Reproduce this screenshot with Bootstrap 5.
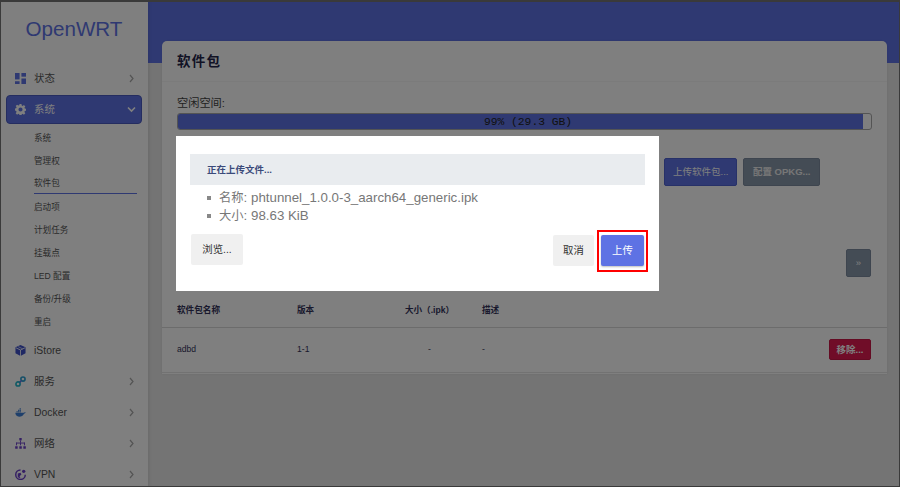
<!DOCTYPE html>
<html lang="zh-CN">
<head>
<meta charset="utf-8">
<title>OpenWRT</title>
<link href="https://cdn.jsdelivr.net/npm/bootstrap@5.3.0/dist/css/bootstrap.min.css" rel="stylesheet">
<style>
html,body{height:100%;overflow:hidden}
body{font-family:"Liberation Sans","Noto Sans CJK SC",sans-serif;background:#e8e8e8;color:#32325d;font-size:10px}
.shell{height:487px;width:900px;overflow:hidden}
.side{width:148px;flex:none;background:#fff;box-shadow:0 0 4px rgba(0,0,0,.15);z-index:1;height:487px;overflow:hidden}
.side>*{flex:none}
.brand{height:64px;padding-top:14px;font-size:20.6px;line-height:30px;color:#5e72e4;text-align:center}
.top-item{display:flex;align-items:center;height:29px;margin:0 6px 2px;padding:0 7px 0 9px;font-size:10.4px;color:#555;border-radius:4px;text-decoration:none}
.top-item svg.ico{width:11px;height:11px;margin-right:8px;flex:none}
.top-item .chev{margin-left:auto;width:7px;height:9px;color:#a8a8a8}
.top-item.on{background:#5e72e4;color:#fff;border:1px solid #4a5bc0;padding:0 5px 0 8px}
.top-item.on .chev{width:9px;height:7px;color:#fff}
.sub-list{margin:0 0 3px;padding:0}
.sub-list li{list-style:none;height:23px;line-height:25px;margin-left:34px;margin-right:11px;font-size:8.6px;color:#555}
.sub-list li.cur{border-bottom:1px solid #5e72e4;height:22px;line-height:23px;margin-bottom:1px}
.main-pane{min-width:0}
.hero{height:63px;background:#5e72e4;margin-bottom:-22px;flex:none}
.sheet{margin:0 13px 0 14px;background:#fff;border-radius:5px 5px 0 0;box-shadow:0 0 2px rgba(0,0,0,.08);height:333px;z-index:1;position:relative}
.sheet-head{height:41px;padding:10px 15px 0;font-size:13.5px;font-weight:700;line-height:21px;color:#25254a;border-bottom:1px solid #f6f6f6;letter-spacing:1.2px}
.sheet-body{padding:14px 15px 0}
.free-lbl{font-size:11.2px;line-height:14px;color:#444;margin-bottom:3px}
.free-bar{height:17px;border:1px solid #a8a8a8;border-radius:3px;background:#fff;position:relative;font:11.3px/16px "Liberation Mono",monospace;color:#333}
.free-fill{background:#5e72e4;border-radius:2px 0 0 2px;height:100%}
.free-txt{position:absolute;left:7px;right:0;top:0;text-align:center;color:#222}
.tool-row{margin-top:28px;height:28px;padding-right:52px}
.mini-btn{font-size:9.5px;height:28px;padding:0 8px;border-radius:2px;line-height:26px;color:#fff;border:1px solid}
.mini-blue{background:#5e72e4;border-color:#4e62d0;margin-right:6px}
.mini-slate{background:#8898aa;border-color:#7c8b9e;color:#eee;font-weight:700;padding:0 8.5px}
.next-row{margin-top:63px;height:28px;padding-right:1px}
.next-btn{width:25px;height:28px;background:#8898aa;border:1px solid #7c8b9e;border-radius:2px;color:#fff;padding:0;font-size:9.5px;line-height:24px}
.pkg-table{--bs-table-bg:transparent;margin:18px 0 0 0;table-layout:fixed;font-size:8.6px;width:100%}
.pkg-table>thead th{height:32px;font-weight:700;border-bottom:1px solid #d8d8d8;color:#33335a;vertical-align:middle;padding:0 0 0 15px}
.pkg-table>tbody td{height:45px;border-bottom:1px solid #e4e4e4;color:#33335a;vertical-align:middle;padding:0 0 0 15px;font-size:8.6px}
.c-name{width:120px}.c-ver{width:100px}.c-size{width:85px}
.pkg-table>thead th.c-size,.pkg-table>tbody td.c-size{padding-left:10px;padding-right:0;text-align:center}
.rm-btn{background:#e01a50;border:1px solid #c81646;font-size:9.5px;color:#fff;height:21px;width:42px;padding:0;line-height:18px;border-radius:2px;font-weight:700}
.frame-edge{position:fixed;inset:0;border:1px solid #3a3a3a;border-top-width:2px;z-index:1100;pointer-events:none}
.upload-dlg{position:fixed;left:176px;top:136px;width:483px;height:155px;background:#fff;z-index:1060;padding:18px 14px 0;color:#666}
.up-title{background:#e9ecef;height:31px;line-height:31px;padding-left:17px;font-size:9.5px;font-weight:700;color:#3b4a7a}
.up-list{list-style:none;margin:4px 0 0;padding:0 0 0 17px;font-size:13.3px;line-height:18px;color:#777}
.up-list li::before{content:"";display:inline-block;width:4px;height:4px;background:#888;margin-right:8px;vertical-align:2px}
.cjk-lab{font-size:12.3px}
.up-actions{margin-top:9px}
.dlg-btn{font-size:10.4px;height:31px;padding:0;background:#f0f0f0;border:0;border-radius:2px;color:#333}
.dlg-browse{width:52px;margin-left:1px}
.dlg-cancel{width:41px;margin-top:1px}
.dlg-send{width:43px;margin:1px 1px 0 7px;background:#5e72e4;color:#fff;box-shadow:0 1px 2px rgba(0,0,0,.25)}
.red-mark{position:absolute;left:421px;top:94px;width:51px;height:42px;border:2px solid #f00;pointer-events:none}
</style>
</head>
<body>
<div class="shell d-flex">
  <aside class="side d-flex flex-column">
    <div class="brand">OpenWRT</div>
    <a class="top-item"><svg class="ico" viewBox="0 0 12 12" fill="#5e72e4"><rect x="0" y="0" width="5" height="7"/><rect x="7" y="0" width="5" height="4"/><rect x="7" y="6" width="5" height="6"/><rect x="0" y="9" width="5" height="3"/></svg>状态<svg class="chev" viewBox="0 0 7 9" fill="none" stroke="currentColor" stroke-width="1.2"><path d="M2 1l3 3.500-3 3.500"/></svg></a>
    <a class="top-item on"><svg class="ico" viewBox="0 0 16 16" fill="#fff"><path fill-rule="evenodd" d="M6.600 0h2.800l.4 2.200 1.300.6 1.900-1.300 2 2-1.300 1.900.6 1.300 2.200.4v2.800l-2.200.4-.6 1.300 1.300 1.900-2 2-1.900-1.300-1.300.6-.4 2.200H6.600l-.4-2.200-1.300-.6-1.900 1.300-2-2 1.300-1.900-.6-1.300L-.5 9.400V6.600l2.200-.4.6-1.300L1 3l2-2 1.900 1.300 1.300-.6zM8 5a3 3 0 1 0 0 6 3 3 0 0 0 0-6z"/></svg>系统<svg class="chev" viewBox="0 0 9 7" fill="none" stroke="currentColor" stroke-width="1.600"><path d="M1 1.500l3.500 3.500 3.500-3.500"/></svg></a>
    <ul class="sub-list">
      <li>系统</li><li>管理权</li><li class="cur">软件包</li><li>启动项</li><li>计划任务</li><li>挂载点</li><li>LED 配置</li><li>备份/升级</li><li>重启</li>
    </ul>
    <a class="top-item"><svg class="ico" viewBox="0 0 12 12"><path d="M6 0l5.500 2.500v6.500L6 12 .5 9V2.500z" fill="#3f51c8"/><path d="M1 3l5 2.500L11 3M6 5.500V12" stroke="#fff" stroke-width=".9" fill="none"/><path d="M3.500 1.800l5 2.500" stroke="#fff" stroke-width=".7"/></svg>iStore</a>
    <a class="top-item"><svg class="ico" viewBox="0 0 12 12" fill="none" stroke="#1fb5c9" stroke-width="1.700"><circle cx="3.300" cy="8.700" r="2.300"/><circle cx="8.700" cy="3.300" r="2.300" stroke="#2a9fd0"/><path d="M5 7l2-2" stroke="#5e72e4"/></svg>服务<svg class="chev" viewBox="0 0 7 9" fill="none" stroke="currentColor" stroke-width="1.2"><path d="M2 1l3 3.500-3 3.500"/></svg></a>
    <a class="top-item"><svg class="ico" viewBox="0 0 12 12" fill="#3d7fd6"><path d="M.3 6.300h9.200c.5-.6 1.300-.8 2.200-.5-.3 1-1 1.500-1.900 1.500C9 9.500 7 10.500 4.500 10.500 1.800 10.500.5 8.800.3 6.300z"/><rect x="1.600" y="4.600" width="1.400" height="1.300"/><rect x="3.300" y="4.600" width="1.400" height="1.300"/><rect x="5" y="4.600" width="1.400" height="1.300"/><rect x="3.300" y="3" width="1.400" height="1.300"/><rect x="5" y="3" width="1.400" height="1.300"/><rect x="5" y="1.400" width="1.400" height="1.300"/></svg>Docker<svg class="chev" viewBox="0 0 7 9" fill="none" stroke="currentColor" stroke-width="1.2"><path d="M2 1l3 3.500-3 3.500"/></svg></a>
    <a class="top-item"><svg class="ico" viewBox="0 0 12 12" fill="#6a3fc8"><rect x="4.700" y="0" width="2.600" height="2.600"/><rect x="5.500" y="2.600" width="1" height="2.400"/><rect x="1.200" y="5" width="9.600" height="1"/><rect x="1.200" y="5" width="1" height="3"/><rect x="9.800" y="5" width="1" height="3"/><rect x="5.500" y="5" width="1" height="3"/><rect x=".2" y="9" width="2.700" height="2.700"/><rect x="4.700" y="9" width="2.700" height="2.700"/><rect x="9.100" y="9" width="2.700" height="2.700"/></svg>网络<svg class="chev" viewBox="0 0 7 9" fill="none" stroke="currentColor" stroke-width="1.2"><path d="M2 1l3 3.500-3 3.500"/></svg></a>
    <a class="top-item"><svg class="ico" viewBox="0 0 12 12"><path d="M6 1a5.200 5.200 0 1 0 5.200 5.200" fill="none" stroke="#6a3fc8" stroke-width="1.600"/><path d="M3 5l3-1 1 2-2 2 1 2-3-1z" fill="#6a3fc8"/><circle cx="9.500" cy="2.500" r="1.800" fill="#6a3fc8"/></svg>VPN<svg class="chev" viewBox="0 0 7 9" fill="none" stroke="currentColor" stroke-width="1.2"><path d="M2 1l3 3.500-3 3.500"/></svg></a>
  </aside>
  <main class="main-pane flex-grow-1 d-flex flex-column">
    <div class="hero"></div>
    <section class="sheet">
      <div class="sheet-head">软件包</div>
      <div class="sheet-body">
        <div class="free-lbl">空闲空间:</div>
        <div class="free-bar"><div class="free-fill" style="width:98.8%"></div><div class="free-txt">99% (29.3 GB)</div></div>
        <div class="tool-row d-flex justify-content-end">
          <button class="btn mini-btn mini-blue">上传软件包...</button>
          <button class="btn mini-btn mini-slate">配置 OPKG...</button>
        </div>
        <div class="next-row d-flex justify-content-end"><button class="btn next-btn">»</button></div>
      </div>
      <table class="table pkg-table">
        <thead><tr><th class="c-name">软件包名称</th><th class="c-ver">版本</th><th class="c-size">大小（.ipk）</th><th>描述</th><th></th></tr></thead>
        <tbody><tr><td>adbd</td><td>1-1</td><td class="c-size">-</td><td>-</td><td class="text-end pe-3"><button class="btn rm-btn">移除...</button></td></tr></tbody>
      </table>
    </section>
  </main>
</div>
<div class="modal-backdrop show"></div>
<div class="upload-dlg">
  <div class="up-title">正在上传文件...</div>
  <ul class="up-list">
    <li><span class="cjk-lab">名称</span>: phtunnel_1.0.0-3_aarch64_generic.ipk</li>
    <li><span class="cjk-lab">大小</span>: 98.63 KiB</li>
  </ul>
  <div class="up-actions d-flex align-items-start">
    <button class="btn dlg-btn dlg-browse">浏览...</button>
    <button class="btn dlg-btn dlg-cancel ms-auto">取消</button>
    <button class="btn dlg-btn dlg-send">上传</button>
  </div>
  <div class="red-mark"></div>
</div>
<div class="frame-edge"></div>
<script src="https://cdn.jsdelivr.net/npm/bootstrap@5.3.0/dist/js/bootstrap.bundle.min.js"></script>
</body>
</html>
